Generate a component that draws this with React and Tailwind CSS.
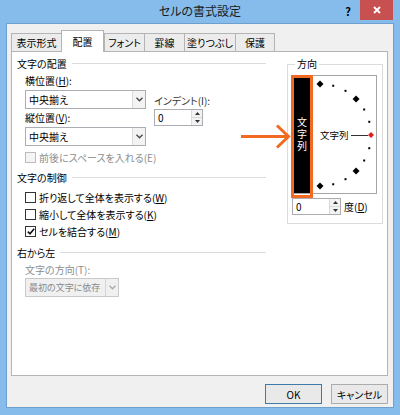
import React from "react";

const FONT = "font-['Noto_Sans_CJK_JP',sans-serif] [font-feature-settings:'palt']";

function Chevron({ color = "#444" }) {
  return (
    <svg width="7" height="5" viewBox="0 0 7 5">
      <path d="M0.5 0.8 L3.5 3.8 L6.5 0.8" fill="none" stroke={color} strokeWidth="1.3" />
    </svg>
  );
}

function Combo({ text, width, disabled = false, textClass = "" }) {
  return (
    <div
      className={`flex h-[19px] border ${disabled ? "border-[#c9c9c9] bg-[#f0f0f0] text-[#8a8a8a]" : "border-[#abadb3] bg-white text-black"}`}
      style={{ width }}
    >
      <div className={`flex-1 min-w-0 pl-[3px] leading-[17px] whitespace-nowrap ${textClass}`}>{text}</div>
      <div className={`w-[13px] shrink-0 grid place-items-center border-l ${disabled ? "border-[#d4d4d4]" : "border-[#dadada] bg-[#f3f3f3]"}`}>
        <Chevron color={disabled ? "#aaa" : "#444"} />
      </div>
    </div>
  );
}

function Spin({ value, width = 49 }) {
  return (
    <div className="flex h-[17px] border border-[#abadb3] bg-white" style={{ width }}>
      <div className="flex-1 pl-[3px] leading-[15px]">{value}</div>
      <div className="w-[11px] flex flex-col border-l border-[#dadada]">
        <div className="flex-1 grid place-items-center bg-[#f3f3f3] border-b border-[#dadada]">
          <svg width="5" height="3" viewBox="0 0 5 3"><path d="M0 3 L2.5 0 L5 3 Z" fill="#333" /></svg>
        </div>
        <div className="flex-1 grid place-items-center bg-[#f3f3f3]">
          <svg width="5" height="3" viewBox="0 0 5 3"><path d="M0 0 L2.5 3 L5 0 Z" fill="#333" /></svg>
        </div>
      </div>
    </div>
  );
}

function Check({ checked = false, disabled = false, children }) {
  return (
    <div className={`flex items-center h-[16px] ${disabled ? "text-[#8d8d8d]" : "text-black"}`}>
      <div className={`w-[11px] h-[11px] border grid place-items-center ${disabled ? "border-[#bcbcbc] bg-[#f4f4f4]" : "border-[#333] bg-white"}`}>
        {checked && (
          <svg width="8" height="7" viewBox="0 0 8 7">
            <path d="M0.8 3.6 L3 5.8 L7.2 0.8" fill="none" stroke="#111" strokeWidth="1.6" />
          </svg>
        )}
      </div>
      <span className="ml-[3px]">{children}</span>
    </div>
  );
}

function Header({ children, className = "" }) {
  return (
    <div className={`flex items-center h-[16px] ${className}`}>
      <span>{children}</span>
      <div className="flex-1 h-px bg-[#dcdcdc] ml-[5px]" />
    </div>
  );
}

function Tab({ label, active, width }) {
  if (active) {
    return (
      <div
        className="relative z-10 h-[22px] -mb-px bg-white border border-b-0 border-[#b4b4b4] grid place-items-center"
        style={{ width }}
      >
        {label}
      </div>
    );
  }
  return (
    <div
      className="h-[18px] bg-[#ececec] border border-[#b4b4b4] border-b-0 -mr-px grid place-items-center"
      style={{ width }}
    >
      {label}
    </div>
  );
}

const u = (c) => <span className="underline">{c}</span>;

function Dial() {
  const cx = 320, cy = 134, r = 51;
  const pts = [];
  for (let a = 90; a >= -90; a -= 15) {
    const rad = (a * Math.PI) / 180;
    pts.push({ a, x: cx + r * Math.cos(rad), y: cy - r * Math.sin(rad) });
  }
  return (
    <svg width="66" height="117" viewBox="310 75 66 117">
      {pts.map((p) => {
        if (p.a === 0) {
          return <polygon key={p.a} points={`${p.x},${p.y - 3} ${p.x + 3},${p.y} ${p.x},${p.y + 3} ${p.x - 3},${p.y}`} fill="#e0201b" />;
        }
        if (p.a % 45 === 0) {
          return <polygon key={p.a} points={`${p.x},${p.y - 3.5} ${p.x + 3.5},${p.y} ${p.x},${p.y + 3.5} ${p.x - 3.5},${p.y}`} fill="#000" />;
        }
        return <rect key={p.a} x={p.x - 1} y={p.y - 1} width="2" height="2" fill="#000" />;
      })}
      <text x="320" y="137.5" fontSize="9.5" fill="#000" fontFamily="'Noto Sans CJK JP', sans-serif">文字列</text>
      <line x1="351" y1="134.5" x2="368" y2="134.5" stroke="#333" strokeWidth="1" />
    </svg>
  );
}

export default function App() {
  return (
    <div className={`w-[400px] h-[415px] bg-[#86bcec] flex flex-col text-[10px] text-black ${FONT}`}>
      {/* title bar */}
      <div className="relative h-[23px] shrink-0">
        <div className="absolute inset-0 grid place-items-center text-[12px] text-[#1b1b1b] pb-[1px]">セルの書式設定</div>
        <div className="absolute right-[7px] top-0 flex items-start">
          <span className="text-[11px] font-bold mt-[3px] mr-[9px]">?</span>
          <div className="w-[33px] h-[20px] bg-[#c75050] grid place-items-center">
            <svg width="8" height="8" viewBox="0 0 8 8">
              <path d="M1 1 L7 7 M7 1 L1 7" stroke="#fff" strokeWidth="1.8" />
            </svg>
          </div>
        </div>
      </div>

      {/* client area */}
      <div className="mx-[6px] mb-[7px] flex-1 bg-[#f0f0f0] border border-[#6e9fcd] pl-[4px] pr-[5px]">
        <div className="flex items-end h-[27px]">
          <Tab label="表示形式" width={51} />
          <Tab label="配置" width={43} active />
          <Tab label="フォント" width={41} />
          <Tab label="罫線" width={41} />
          <Tab label="塗りつぶし" width={52} />
          <Tab label="保護" width={40} />
        </div>

        <div className="h-[325px] bg-white border border-[#b4b4b4] flex pl-[5px] pt-[3px]">
          {/* left column */}
          <div className="w-[249px] flex flex-col">
            <Header>文字の配置</Header>
            <div className="flex ml-[8px] mt-[2px]">
              <div className="w-[121px] flex flex-col">
                <div className="h-[16px] leading-[16px]">横位置({u("H")}):</div>
                <div className="mt-px"><Combo text="中央揃え" width={121} /></div>
                <div className="h-[16px] leading-[16px] mt-px">縦位置({u("V")}):</div>
                <div className="mt-px"><Combo text="中央揃え" width={121} /></div>
              </div>
              <div className="ml-[8px] flex flex-col">
                <div className="h-[16px] leading-[16px] mt-[20px] text-[#333]">インデント(I):</div>
                <Spin value="0" />
              </div>
            </div>
            <div className="ml-[8px] mt-[3px]">
              <Check disabled>前後にスペースを入れる(E)</Check>
            </div>

            <Header className="mt-[4px]">文字の制御</Header>
            <div className="ml-[8px] mt-[4px] flex flex-col gap-px">
              <Check>折り返して全体を表示する({u("W")})</Check>
              <Check>縮小して全体を表示する({u("K")})</Check>
              <Check checked>セルを結合する({u("M")})</Check>
            </div>

            <Header className="mt-[5px]">右から左</Header>
            <div className="ml-[8px] mt-[3px] h-[14px] leading-[14px] text-[#8d8d8d]">文字の方向(T):</div>
            <div className="ml-[8px] mt-px">
              <Combo text="最初の文字に依存" width={94} disabled textClass="text-[9px]" />
            </div>
          </div>

          {/* right column */}
          <div className="ml-[21px] mt-[2px]">
            <fieldset className="w-[96px] border border-[#dcdcdc] pl-[4px] pb-[8px]">
              <legend className="ml-[3px] px-[2px] leading-[14px]">方向</legend>
              <div className="relative mt-[4px] w-[85px] h-[119px] border border-[#a5a5a5] flex">
                <div className="w-[17px] bg-black grid place-items-center">
                  <span className="text-white text-[10px] [writing-mode:vertical-rl] leading-none tracking-[2px]">文字列</span>
                </div>
                <Dial />
                {/* orange annotation */}
                <div className="absolute left-[-2px] top-[-1px] w-[22px] h-[123px] border-[3px] border-[#f26a21]" />
                <svg className="absolute left-[-52px] top-[48px]" width="52" height="26" viewBox="240 122 52 26">
                  <path d="M240 134.5 H287" stroke="#f26a21" strokeWidth="3" fill="none" />
                  <path d="M276 123.5 L287.5 134.5 L276 145.5" stroke="#f26a21" strokeWidth="3" fill="none" />
                </svg>
              </div>
              <div className="flex items-center mt-[4px]">
                <Spin value="0" width={49} />
                <span className="ml-[3px]">度({u("D")})</span>
              </div>
            </fieldset>
          </div>
        </div>

        <div className="flex justify-end gap-[9px] mt-[8px]">
          <div className="w-[57px] h-[20px] border border-[#3d7bad] bg-[#e9e9e9] grid place-items-center">OK</div>
          <div className="w-[57px] h-[20px] border border-[#acacac] bg-[#e9e9e9] grid place-items-center">キャンセル</div>
        </div>
      </div>
    </div>
  );
}
